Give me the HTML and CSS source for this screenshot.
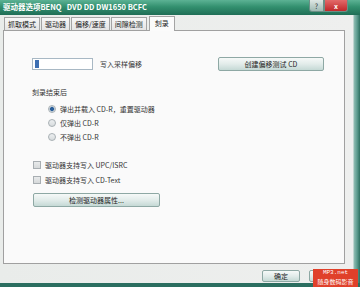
FILE: index.html
```html
<!DOCTYPE html>
<html>
<head>
<meta charset="utf-8">
<link rel="stylesheet" href="styles.css">
</head>
<body>
<div class="window">
  <div class="titlebar">
    <span class="title">驱动器选项BENQ&nbsp;&nbsp;&nbsp;DVD DD DW1650 BCFC</span>
    <div class="caps">
      <span class="cap help">?</span>
      <span class="cap close">x</span>
    </div>
  </div>
  <div class="client">
    <div class="tabs">
      <span class="tab">抓取模式</span>
      <span class="tab">驱动器</span>
      <span class="tab">偏移/速度</span>
      <span class="tab">间隙检测</span>
      <span class="tab active">刻录</span>
    </div>
    <div class="panel">
      <div class="row offset">
        <div class="left">
          <span class="input"><span class="caret"></span></span>
          <span class="lbl">写入采样偏移</span>
        </div>
        <span class="btn create">创建偏移测试 CD</span>
      </div>
      <div class="group-title">刻录结束后</div>
      <div class="radios">
        <div class="opt"><span class="radio on"></span><span>弹出并载入 CD-R，重置驱动器</span></div>
        <div class="opt"><span class="radio"></span><span>仅弹出 CD-R</span></div>
        <div class="opt"><span class="radio"></span><span>不弹出 CD-R</span></div>
      </div>
      <div class="checks">
        <div class="opt"><span class="check"></span><span>驱动器支持写入 UPC/ISRC</span></div>
        <div class="opt"><span class="check"></span><span>驱动器支持写入 CD-Text</span></div>
      </div>
      <span class="btn detect">检测驱动器属性...</span>
    </div>
    <div class="footer">
      <span class="btn ok">确定</span>
      <span class="btn cancel">取消</span>
    </div>
  </div>
  <div class="bottom"></div>
  <div class="watermark"><span class="wm1">MP3.net</span><span class="wm2">随身数码影音</span></div>
</div>
</body>
</html>
```
FILE: styles.css
```css
* { box-sizing: border-box; }
html, body { margin: 0; padding: 0; }
body {
  width: 360px; height: 287px; overflow: hidden;
  font-family: "Noto Sans CJK SC", "Liberation Sans", sans-serif;
  font-size: 7px; color: #333;
  background: #2c6e5f;
}
.window {
  position: relative;
  width: 360px; height: 287px;
  display: flex; flex-direction: column;
  background: linear-gradient(to right, #e9ecea 0, #eeefee 353px, #8fbcb2 354px, #5e9d90 357px, #2d6f60 360px);
}
.titlebar {
  height: 15px; flex: none;
  display: flex; align-items: flex-start; justify-content: space-between;
  background: linear-gradient(to bottom, #5cb294 0%, #33906f 45%, #1f6e56 100%);
  color: #fff; padding-left: 3px;
}
.title { font-size: 7.5px; line-height: 14px; font-weight: bold; white-space: pre; }
.caps { display: flex; margin-right: 12px; }
.cap { height: 12px; display: flex; align-items: center; justify-content: center; font-size: 7px; border: 1px solid #6b8f86; border-top: none; }
.help { width: 15px; background: linear-gradient(#dfe8e5, #9fbab3); color: #333; border-radius: 0 0 0 3px; }
.close { width: 24px; background: linear-gradient(#e36a6a, #c0282a); color: #fff; font-weight: bold; border-radius: 0 0 3px 0; }
.client {
  flex: 1; display: flex; flex-direction: column;
  padding: 2px 0 0 3px; width: 353px;
}
.tabs { display: flex; align-items: flex-end; height: 13px; padding-left: 1px; }
.tab {
  height: 13px; padding: 0 3px; margin-right: 1px;
  border: 1px solid #a4a4a4; border-bottom: none;
  background: linear-gradient(#f7f7f7, #e4e4e4);
  line-height: 12px; font-size: 7px; color: #222;
}
.tab.active { height: 15px; background: #fbfbfb; margin-bottom: -1px; position: relative; z-index: 1; padding: 0 5px; margin-left: 1px; }
.panel {
  width: 342px; height: 234px;
  border: 1px solid #a0a0a0; background: #fafafa;
  display: flex; flex-direction: column;
  padding: 26px 20px 0 28px;
}
.row.offset { display: flex; justify-content: space-between; align-items: center; height: 14px; }
.left { display: flex; align-items: center; gap: 7px; }
.input { width: 61px; height: 12px; border: 1px solid #a8b8c4; background: #fff; display: flex; align-items: center; padding-left: 2px; }
.caret { width: 4px; height: 8px; background: #3d6fb2; }
.btn {
  display: flex; align-items: center; justify-content: center;
  border: 1px solid #8ea8a4; border-radius: 2px;
  background: linear-gradient(#f6f9f8 0%, #e2ecea 50%, #c5d9d5 100%);
  font-size: 7px; color: #222;
}
.create { width: 106px; height: 14px; }
.group-title { margin-top: 15px; line-height: 12px; }
.radios { display: flex; flex-direction: column; gap: 2px; margin-top: 5px; padding-left: 16px; }
.opt { display: flex; align-items: center; gap: 4px; height: 12px; }
.radio { width: 8px; height: 8px; border-radius: 50%; border: 1px solid #a8b0b4; background: linear-gradient(#eceff0, #d8dcde); flex: none; }
.radio.on { background: radial-gradient(circle, #2a5f9a 0 1.6px, #9fb3c8 2.2px, #e4e8ea 3px); }
.checks { display: flex; flex-direction: column; gap: 3px; margin-top: 16px; padding-left: 1px; }
.check { width: 8px; height: 8px; border: 1px solid #a8aeb2; background: linear-gradient(#e8eaeb, #d6d9da); flex: none; }
.detect { width: 127px; height: 14px; margin-top: 7px; margin-left: 1px; }
.footer { display: flex; justify-content: flex-end; gap: 9px; padding: 6px 6px 0 0; }
.ok, .cancel { width: 38px; height: 12px; }
.bottom { height: 4px; flex: none; background: #2b6e60; }
.watermark {
  position: absolute; left: 313px; top: 269px; width: 45px; height: 18px;
  background: #e0402a; color: #fff;
  display: flex; flex-direction: column; align-items: center;
  overflow: hidden; z-index: 2;
}
.wm1 { font-family: "Liberation Mono", monospace; font-size: 6px; line-height: 8px; height: 8px; }
.wm2 { font-size: 6px; line-height: 9px; height: 9px; }
```
